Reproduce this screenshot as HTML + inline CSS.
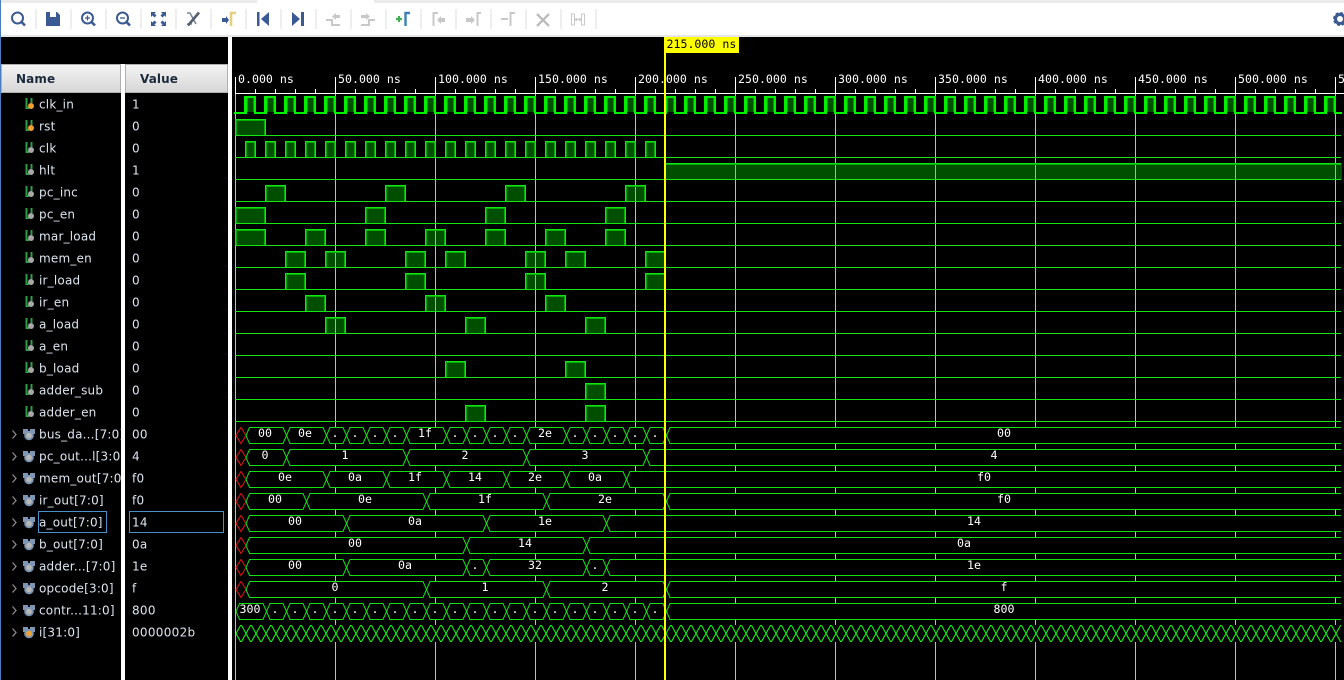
<!DOCTYPE html>
<html><head><meta charset="utf-8"><style>
html,body{margin:0;padding:0;background:#000;width:1344px;height:680px;overflow:hidden}
svg{display:block;position:absolute;left:0;top:0}
.n{font:12px "DejaVu Sans",sans-serif;fill:#dce4ee;letter-spacing:.2px}
.v{font:12px "DejaVu Sans",sans-serif;fill:#dce4ee;letter-spacing:.3px}
.h{font:bold 12px "DejaVu Sans",sans-serif;fill:#1c2a3c;letter-spacing:.1px}
.m{font:11.6px "DejaVu Sans Mono",monospace;fill:#fff}
.w{font:11.6px "DejaVu Sans Mono",monospace;fill:#fff;text-anchor:middle}
.g{stroke:#c8c8c8;stroke-width:2;fill:none}
.nv{stroke:#3b5a94;stroke-width:2;fill:none}
</style></head><body>
<svg width="1344" height="680" viewBox="0 0 1344 680" xmlns="http://www.w3.org/2000/svg">
<defs>
<pattern id="grid" x="235" y="0" width="100" height="10" patternUnits="userSpaceOnUse"><rect width="1" height="10" fill="#bdbdbd"/></pattern>
<pattern id="maj" x="235" y="0" width="100" height="10" patternUnits="userSpaceOnUse"><rect width="1" height="10" fill="#fff"/></pattern>
<pattern id="min" x="235" y="0" width="20" height="10" patternUnits="userSpaceOnUse"><rect width="1" height="10" fill="#fff"/></pattern>
<pattern id="ck" x="244" y="96" width="20" height="18" patternUnits="userSpaceOnUse">
<rect x="3" y="2" width="7" height="14" fill="#005000"/><rect x="3" y="2" width="1" height="14" fill="#00a000"/><rect x="9" y="2" width="1" height="14" fill="#00a000"/>
<rect x="0" y="0" width="3" height="18" fill="#00f000"/><rect x="0" y="0" width="12" height="2" fill="#00f000"/><rect x="10" y="0" width="2" height="18" fill="#00f000"/><rect x="10" y="16" width="10" height="2" fill="#00f000"/>
</pattern>
<pattern id="zz" x="241" y="625" width="10" height="17" patternUnits="userSpaceOnUse"><path d="M0 .5H.5L9.5 16.5H10M0 16.5H.5L9.5 .5H10" stroke="#14f014" stroke-width="1.1" fill="none"/></pattern>
<g id="p10"><rect x="1" y="-15" width="9" height="15" fill="#005000"/><path d="M.5 0V-15.5H10.5V0" stroke="#14e614" fill="none"/><path d="M1.5 0V-14.5H9.5V0" stroke="#00b000" fill="none"/></g>
<g id="p20"><rect x="1" y="-15" width="19" height="15" fill="#00ff00" opacity=".31"/><path d="M.5 0V-15.5H20.5V0" stroke="#14e614" fill="none"/><path d="M1.5 0V-14.5H19.5V0" stroke="#00b000" fill="none"/></g>
<g id="p30"><rect x="1" y="-15" width="29" height="15" fill="#00ff00" opacity=".31"/><path d="M.5 0V-15.5H30.5V0" stroke="#14e614" fill="none"/><path d="M1.5 0V-14.5H29.5V0" stroke="#00b000" fill="none"/></g>
<g id="bus"><rect x="236" y="0" width="1106" height="17" fill="#000"/><path d="M236 8.5L241 .5L246 8.5L241 16.5Z" stroke="#e81414" fill="none"/><path d="M246 8.5L249.5 .5H1341M246 8.5L249.5 16.5H1341" stroke="#12e012" fill="none"/></g>
<g id="x"><rect x="-3" y="0" width="6" height="17" fill="#000"/><path d="M-3.5 .5L3.5 16.5M-3.5 16.5L3.5 .5" stroke="#12e012" fill="none"/></g>
<g id="s"><path d="M26.5 -4V6H29M31.5 -4V1" stroke="#2f9e44" stroke-width="2" fill="none"/></g>
<circle id="dg" r="3" fill="#a8a8a8"/>
<circle id="do" r="3" fill="#f0a030"/>
<g id="bi"><rect x="23" y="-5" width="5" height="5" fill="#7d96b4"/><rect x="30" y="-5" width="5" height="5" fill="#7d96b4"/><path d="M12.5 -3.5L16 0.5L12.5 4.5" stroke="#8a8a8a" stroke-width="1.3" fill="none"/><circle cx="29" cy="1.500" r="4.800" fill="#7d96b4"/><circle cx="29" cy="1.500" r="2.800" fill="#b8b8b8"/></g>
<clipPath id="nc"><rect x="0" y="94" width="121" height="586"/></clipPath>
</defs>

<!-- toolbar -->
<rect x="0" y="0" width="1344" height="3" fill="#ebebeb"/>
<rect x="257" y="0" width="117" height="3" fill="#fff"/>
<rect x="0" y="3" width="1344" height="32" fill="#fff"/>
<rect x="0" y="35" width="1344" height="2" fill="#e6e6e6"/>
<path d="M36 9V29M71 9V29M106 9V29M141 9V29M176 9V29M211 9V29M246 9V29M281 9V29M316 9V29M351 9V29M386 9V29M421 9V29M456 9V29M491 9V29M526 9V29M561 9V29M596 9V29" stroke="#dcdcdc" fill="none"/>
<circle cx="17.5" cy="18" r="5.5" class="nv"/><path d="M21.5 22L25 25.5" stroke="#3b5a94" stroke-width="2.6"/>
<path d="M46 12H57L60 15V26H46Z" fill="#3b5a94"/><rect x="50" y="12" width="6" height="5" fill="#fff"/>
<circle cx="87.5" cy="18" r="5.5" class="nv"/><path d="M91.5 22L95 25.5" stroke="#3b5a94" stroke-width="2.6"/><path d="M85 18H90M87.5 15.5V20.5" stroke="#3b5a94" stroke-width="1.3"/>
<circle cx="122.5" cy="18" r="5.5" class="nv"/><path d="M126.5 22L130 25.5" stroke="#3b5a94" stroke-width="2.6"/><path d="M120 18H125" stroke="#3b5a94" stroke-width="1.3"/>
<path d="M151 12H156L154.5 13.5L156.5 15.5L154.5 17.5L152.500 15.5L151 17ZM166 12H161L162.500 13.500L160.500 15.500L162.500 17.500L164.500 15.500L166 17ZM151 26H156L154.500 24.500L156.500 22.500L154.500 20.500L152.500 22.500L151 21ZM166 26H161L162.500 24.500L160.500 22.500L162.500 20.500L164.500 22.500L166 21Z" fill="#3b5a94"/>
<path d="M187 13H190L196 24" stroke="#7a869a" stroke-width="1.600" fill="none"/><path d="M187 24H192" stroke="#7a869a" stroke-width="1.400" fill="none"/><path d="M188 25.500L199 12.500" stroke="#555e6e" stroke-width="2.600" fill="none"/>
<rect x="222" y="18" width="4" height="4" fill="#3b5a94"/><path d="M226 16L229 20L226 24Z" fill="#3b5a94"/><path d="M231 26V13H236" stroke="#e6cf80" stroke-width="2.600" fill="none"/>
<rect x="257" y="12" width="2.500" height="14" fill="#3b5a94"/><path d="M269 12L261 19L269 26Z" fill="#3b5a94"/>
<path d="M292 12L300 19L292 26Z" fill="#3b5a94"/><rect x="301" y="12" width="3" height="14" fill="#3b5a94"/>
<path d="M326 20H332V25H340" class="g"/><path d="M340 15H336V13L332 16.500L336 20V18H340Z" fill="#c8c8c8"/>
<path d="M361 25H369V20H375" class="g"/><path d="M361 15H366V13L370 16.500L366 20V18H361Z" fill="#c8c8c8"/>
<path d="M396 19H402M399 16V22" stroke="#3fae55" stroke-width="2.200"/><path d="M405.500 26V13H410" stroke="#3a7fb5" stroke-width="2.400" fill="none"/>
<path d="M433.500 26V13H438" class="g"/><path d="M445 18H441V16L437 20L441 24V22H445Z" fill="#c8c8c8"/>
<rect x="466" y="18" width="5" height="4" fill="#c8c8c8"/><path d="M471 16L475 20L471 24Z" fill="#c8c8c8"/><path d="M477.500 26V13H481" class="g"/>
<path d="M501 19H508" class="g"/><path d="M510.500 26V13H515" class="g"/>
<path d="M537 14L549 26M549 14L537 26" stroke="#bdbdbd" stroke-width="2.400" fill="none"/>
<path d="M571.500 14V25H574.500V14ZM581.500 14V25H584.500V14ZM575 19.500H581M577 18L575 19.500L577 21M579 18L581 19.500L579 21" stroke="#c8c8c8" fill="none"/>
<circle cx="1340" cy="19" r="4.500" fill="none" stroke="#3b5a94" stroke-width="3"/><circle cx="1340" cy="19" r="6" fill="none" stroke="#3b5a94" stroke-width="2" stroke-dasharray="3 1.700"/>

<!-- left accent -->
<rect x="0" y="0" width="1" height="680" fill="#4a7cc4"/>
<!-- dividers -->
<rect x="121" y="64" width="4" height="616" fill="#fff"/>
<rect x="228" y="37" width="4" height="643" fill="#fff"/>

<!-- header -->
<linearGradient id="hg" x1="0" y1="0" x2="0" y2="1"><stop offset="0" stop-color="#f4f4f4"/><stop offset="1" stop-color="#d6d6d6"/></linearGradient>
<rect x="1.500" y="64.500" width="119" height="28" fill="url(#hg)" stroke="#b0b0b0"/>
<rect x="125.500" y="64.500" width="102" height="28" fill="url(#hg)" stroke="#b0b0b0"/>
<text x="16" y="83" class="h">Name</text>
<text x="140" y="83" class="h">Value</text>

<!-- names -->
<g clip-path="url(#nc)">
<g class="n">
<text x="39" y="108.500">clk_in</text>
<text x="39" y="130.500">rst</text>
<text x="39" y="152.500">clk</text>
<text x="39" y="174.500">hlt</text>
<text x="39" y="196.500">pc_inc</text>
<text x="39" y="218.500">pc_en</text>
<text x="39" y="240.500">mar_load</text>
<text x="39" y="262.500">mem_en</text>
<text x="39" y="284.500">ir_load</text>
<text x="39" y="306.500">ir_en</text>
<text x="39" y="328.500">a_load</text>
<text x="39" y="350.500">a_en</text>
<text x="39" y="372.500">b_load</text>
<text x="39" y="394.500">adder_sub</text>
<text x="39" y="416.500">adder_en</text>
<text x="39" y="438.500">bus_da...[7:0]</text>
<text x="39" y="460.500">pc_out...l[3:0]</text>
<text x="39" y="482.500">mem_out[7:0]</text>
<text x="39" y="504.500">ir_out[7:0]</text>
<text x="39" y="526.500">a_out[7:0]</text>
<text x="39" y="548.500">b_out[7:0]</text>
<text x="39" y="570.500">adder...[7:0]</text>
<text x="39" y="592.500">opcode[3:0]</text>
<text x="39" y="614.500">contr...11:0]</text>
<text x="39" y="636.500">i[31:0]</text>
</g>
</g>
<!-- values -->
<g class="v">
<text x="132" y="108.500">1</text><text x="132" y="130.500">0</text><text x="132" y="152.500">0</text><text x="132" y="174.500">1</text><text x="132" y="196.500">0</text><text x="132" y="218.500">0</text><text x="132" y="240.500">0</text><text x="132" y="262.500">0</text><text x="132" y="284.500">0</text><text x="132" y="306.500">0</text><text x="132" y="328.500">0</text><text x="132" y="350.500">0</text><text x="132" y="372.500">0</text><text x="132" y="394.500">0</text><text x="132" y="416.500">0</text>
<text x="132" y="438.500">00</text><text x="132" y="460.500">4</text><text x="132" y="482.500">f0</text><text x="132" y="504.500">f0</text><text x="132" y="526.500">14</text><text x="132" y="548.500">0a</text><text x="132" y="570.500">1e</text><text x="132" y="592.500">f</text><text x="132" y="614.500">800</text><text x="132" y="636.500">0000002b</text>
</g>
<rect x="38.500" y="511.500" width="68" height="21" fill="none" stroke="#4a90c8"/>
<rect x="129.500" y="511.500" width="94" height="21" fill="none" stroke="#4a90c8"/>

<!-- signal icons -->
<use href="#s" y="102"/><use href="#do" x="31" y="106"/>
<use href="#s" y="124"/><use href="#do" x="31" y="128"/>
<use href="#s" y="146"/><use href="#dg" x="31" y="150"/>
<use href="#s" y="168"/><use href="#dg" x="31" y="172"/>
<use href="#s" y="190"/><use href="#dg" x="31" y="194"/>
<use href="#s" y="212"/><use href="#dg" x="31" y="216"/>
<use href="#s" y="234"/><use href="#dg" x="31" y="238"/>
<use href="#s" y="256"/><use href="#dg" x="31" y="260"/>
<use href="#s" y="278"/><use href="#dg" x="31" y="282"/>
<use href="#s" y="300"/><use href="#dg" x="31" y="304"/>
<use href="#s" y="322"/><use href="#dg" x="31" y="326"/>
<use href="#s" y="344"/><use href="#dg" x="31" y="348"/>
<use href="#s" y="366"/><use href="#dg" x="31" y="370"/>
<use href="#s" y="388"/><use href="#dg" x="31" y="392"/>
<use href="#s" y="410"/><use href="#dg" x="31" y="414"/>
<use href="#bi" y="434"/><use href="#bi" y="456"/><use href="#bi" y="478"/><use href="#bi" y="500"/><use href="#bi" y="522"/><use href="#bi" y="544"/><use href="#bi" y="566"/><use href="#bi" y="588"/><use href="#bi" y="610"/><use href="#bi" y="632"/>
<circle cx="29" cy="633.500" r="2.800" fill="#f0a030"/>

<!-- ruler -->
<rect x="232" y="77" width="1112" height="16" fill="url(#maj)"/>
<rect x="235" y="89" width="1109" height="4" fill="url(#min)"/>
<rect x="235" y="93" width="1109" height="1" fill="#fff"/>
<g class="m">
<text x="238" y="83">0.000 ns</text><text x="338" y="83">50.000 ns</text><text x="438" y="83">100.000 ns</text><text x="538" y="83">150.000 ns</text><text x="638" y="83">200.000 ns</text><text x="738" y="83">250.000 ns</text><text x="838" y="83">300.000 ns</text><text x="938" y="83">350.000 ns</text><text x="1038" y="83">400.000 ns</text><text x="1138" y="83">450.000 ns</text><text x="1238" y="83">500.000 ns</text><text x="1338" y="83">5</text>
</g>
<!-- grid -->
<rect x="232" y="94" width="1112" height="586" fill="url(#grid)"/>

<!-- clk_in -->
<rect x="234" y="112" width="10" height="2" fill="#00f000"/>
<rect x="244" y="96" width="1098" height="18" fill="url(#ck)"/>

<!-- baselines -->
<path d="M235 135.500H1341M235 157.500H1341M235 179.500H1341M235 201.500H1341M235 223.500H1341M235 245.500H1341M235 267.500H1341M235 289.500H1341M235 311.500H1341M235 333.500H1341M235 355.500H1341M235 377.500H1341M235 399.500H1341M235 421.500H1341" stroke="#14e614" fill="none"/>

<!-- pulses -->
<use href="#p30" x="235" y="135"/>
<use href="#p10" x="245" y="157"/><use href="#p10" x="265" y="157"/><use href="#p10" x="285" y="157"/><use href="#p10" x="305" y="157"/><use href="#p10" x="325" y="157"/><use href="#p10" x="345" y="157"/><use href="#p10" x="365" y="157"/><use href="#p10" x="385" y="157"/><use href="#p10" x="405" y="157"/><use href="#p10" x="425" y="157"/><use href="#p10" x="445" y="157"/><use href="#p10" x="465" y="157"/><use href="#p10" x="485" y="157"/><use href="#p10" x="505" y="157"/><use href="#p10" x="525" y="157"/><use href="#p10" x="545" y="157"/><use href="#p10" x="565" y="157"/><use href="#p10" x="585" y="157"/><use href="#p10" x="605" y="157"/><use href="#p10" x="625" y="157"/><use href="#p10" x="645" y="157"/>
<rect x="665" y="164" width="677" height="15" fill="#00ff00" opacity=".31"/><path d="M664.500 179V163.500H1341" stroke="#14e614" fill="none"/><path d="M665.500 164.500H1341" stroke="#00b000" fill="none"/>
<use href="#p20" x="265" y="201"/><use href="#p20" x="385" y="201"/><use href="#p20" x="505" y="201"/><use href="#p20" x="625" y="201"/>
<use href="#p30" x="235" y="223"/><use href="#p20" x="365" y="223"/><use href="#p20" x="485" y="223"/><use href="#p20" x="605" y="223"/>
<use href="#p30" x="235" y="245"/><use href="#p20" x="305" y="245"/><use href="#p20" x="365" y="245"/><use href="#p20" x="425" y="245"/><use href="#p20" x="485" y="245"/><use href="#p20" x="545" y="245"/><use href="#p20" x="605" y="245"/>
<use href="#p20" x="285" y="267"/><use href="#p20" x="325" y="267"/><use href="#p20" x="405" y="267"/><use href="#p20" x="445" y="267"/><use href="#p20" x="525" y="267"/><use href="#p20" x="565" y="267"/><use href="#p20" x="645" y="267"/>
<use href="#p20" x="285" y="289"/><use href="#p20" x="405" y="289"/><use href="#p20" x="525" y="289"/><use href="#p20" x="645" y="289"/>
<use href="#p20" x="305" y="311"/><use href="#p20" x="425" y="311"/><use href="#p20" x="545" y="311"/>
<use href="#p20" x="325" y="333"/><use href="#p20" x="465" y="333"/><use href="#p20" x="585" y="333"/>
<use href="#p20" x="445" y="377"/><use href="#p20" x="565" y="377"/>
<use href="#p20" x="585" y="399"/>
<use href="#p20" x="465" y="421"/><use href="#p20" x="585" y="421"/>

<!-- bus rows -->
<use href="#bus" y="427"/><use href="#bus" y="449"/><use href="#bus" y="471"/><use href="#bus" y="493"/><use href="#bus" y="515"/><use href="#bus" y="537"/><use href="#bus" y="559"/><use href="#bus" y="581"/>
<!-- bus_data -->
<use href="#x" x="286.500" y="427"/><use href="#x" x="326.500" y="427"/><use href="#x" x="346.500" y="427"/><use href="#x" x="366.500" y="427"/><use href="#x" x="386.500" y="427"/><use href="#x" x="406.500" y="427"/><use href="#x" x="446.500" y="427"/><use href="#x" x="466.500" y="427"/><use href="#x" x="486.500" y="427"/><use href="#x" x="506.500" y="427"/><use href="#x" x="526.500" y="427"/><use href="#x" x="566.500" y="427"/><use href="#x" x="586.500" y="427"/><use href="#x" x="606.500" y="427"/><use href="#x" x="626.500" y="427"/><use href="#x" x="646.500" y="427"/><use href="#x" x="666.500" y="427"/>
<!-- pc -->
<use href="#x" x="286.500" y="449"/><use href="#x" x="406.500" y="449"/><use href="#x" x="526.500" y="449"/><use href="#x" x="646.500" y="449"/>
<!-- mem -->
<use href="#x" x="326.500" y="471"/><use href="#x" x="386.500" y="471"/><use href="#x" x="446.500" y="471"/><use href="#x" x="506.500" y="471"/><use href="#x" x="566.500" y="471"/><use href="#x" x="626.500" y="471"/>
<!-- ir -->
<use href="#x" x="306.500" y="493"/><use href="#x" x="426.500" y="493"/><use href="#x" x="546.500" y="493"/><use href="#x" x="666.500" y="493"/>
<!-- a -->
<use href="#x" x="346.500" y="515"/><use href="#x" x="486.500" y="515"/><use href="#x" x="606.500" y="515"/>
<!-- b -->
<use href="#x" x="466.500" y="537"/><use href="#x" x="586.500" y="537"/>
<!-- adder -->
<use href="#x" x="346.500" y="559"/><use href="#x" x="466.500" y="559"/><use href="#x" x="486.500" y="559"/><use href="#x" x="586.500" y="559"/><use href="#x" x="606.500" y="559"/>
<!-- opcode -->
<use href="#x" x="426.500" y="581"/><use href="#x" x="546.500" y="581"/><use href="#x" x="666.500" y="581"/>
<!-- contr -->
<rect x="236" y="603" width="1106" height="17" fill="#000"/>
<path d="M236 611.500L239.500 603.500H1341M236 611.500L239.500 619.500H1341" stroke="#12e012" fill="none"/>
<use href="#x" x="266.500" y="603"/><use href="#x" x="286.500" y="603"/><use href="#x" x="306.500" y="603"/><use href="#x" x="326.500" y="603"/><use href="#x" x="346.500" y="603"/><use href="#x" x="366.500" y="603"/><use href="#x" x="386.500" y="603"/><use href="#x" x="406.500" y="603"/><use href="#x" x="426.500" y="603"/><use href="#x" x="446.500" y="603"/><use href="#x" x="466.500" y="603"/><use href="#x" x="486.500" y="603"/><use href="#x" x="506.500" y="603"/><use href="#x" x="526.500" y="603"/><use href="#x" x="546.500" y="603"/><use href="#x" x="566.500" y="603"/><use href="#x" x="586.500" y="603"/><use href="#x" x="606.500" y="603"/><use href="#x" x="626.500" y="603"/><use href="#x" x="646.500" y="603"/><use href="#x" x="666.500" y="603"/>
<!-- i -->
<rect x="236" y="625" width="1106" height="17" fill="#000"/>
<rect x="236" y="625" width="1105" height="17" fill="url(#zz)"/>

<!-- wave labels -->
<g class="w">
<text x="265" y="437">00</text><text x="305" y="437">0e</text><text x="335" y="437">.</text><text x="355" y="437">.</text><text x="375" y="437">.</text><text x="395" y="437">.</text><text x="425" y="437">1f</text><text x="455" y="437">.</text><text x="475" y="437">.</text><text x="495" y="437">.</text><text x="515" y="437">.</text><text x="545" y="437">2e</text><text x="575" y="437">.</text><text x="595" y="437">.</text><text x="615" y="437">.</text><text x="635" y="437">.</text><text x="655" y="437">.</text><text x="1004" y="437">00</text>
<text x="265" y="459">0</text><text x="345" y="459">1</text><text x="465" y="459">2</text><text x="585" y="459">3</text><text x="994" y="459">4</text>
<text x="285" y="481">0e</text><text x="355" y="481">0a</text><text x="415" y="481">1f</text><text x="475" y="481">14</text><text x="535" y="481">2e</text><text x="595" y="481">0a</text><text x="984" y="481">f0</text>
<text x="275" y="503">00</text><text x="365" y="503">0e</text><text x="485" y="503">1f</text><text x="605" y="503">2e</text><text x="1004" y="503">f0</text>
<text x="295" y="525">00</text><text x="415" y="525">0a</text><text x="545" y="525">1e</text><text x="974" y="525">14</text>
<text x="355" y="547">00</text><text x="525" y="547">14</text><text x="964" y="547">0a</text>
<text x="295" y="569">00</text><text x="405" y="569">0a</text><text x="475" y="569">.</text><text x="535" y="569">32</text><text x="595" y="569">.</text><text x="974" y="569">1e</text>
<text x="335" y="591">0</text><text x="485" y="591">1</text><text x="605" y="591">2</text><text x="1004" y="591">f</text>
<text x="250" y="613">300</text><text x="275" y="613">.</text><text x="295" y="613">.</text><text x="315" y="613">.</text><text x="335" y="613">.</text><text x="355" y="613">.</text><text x="375" y="613">.</text><text x="395" y="613">.</text><text x="415" y="613">.</text><text x="435" y="613">.</text><text x="455" y="613">.</text><text x="475" y="613">.</text><text x="495" y="613">.</text><text x="515" y="613">.</text><text x="535" y="613">.</text><text x="555" y="613">.</text><text x="575" y="613">.</text><text x="595" y="613">.</text><text x="615" y="613">.</text><text x="635" y="613">.</text><text x="655" y="613">.</text><text x="1004" y="613">800</text>
</g>

<!-- cursor -->
<rect x="664" y="37" width="2" height="643" fill="#ffff00"/>
<rect x="665" y="37" width="74" height="16" fill="#ffff00"/>
<text x="666.500" y="48" class="m" style="fill:#000">215.000 ns</text>
</svg>
</body></html>
